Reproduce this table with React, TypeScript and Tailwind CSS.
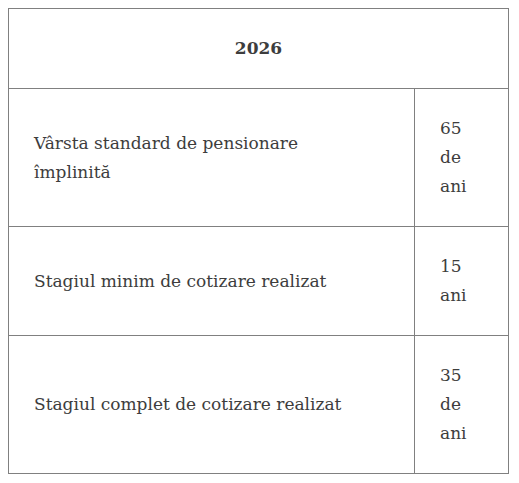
export default function App() {
  const cell = "border border-[#808080] px-[25px] py-[25px] align-middle";
  return (
    <div className="p-2 bg-white min-h-screen">
      <table
        className="border-collapse w-[500px] table-fixed text-[#3d3d3d] text-[17px] leading-[29px]"
        style={{ fontFamily: '"DejaVu Serif", Georgia, serif' }}
      >
        <colgroup>
          <col className="w-[406px]" />
          <col className="w-[94px]" />
        </colgroup>
        <tbody>
          <tr>
            <td colSpan={2} className={`${cell} text-center font-bold`}>
              2026
            </td>
          </tr>
          <tr>
            <td className={cell}>
              Vârsta standard de pensionare
              <br />
              împlinită
            </td>
            <td className={cell}>65 de ani</td>
          </tr>
          <tr>
            <td className={cell}>Stagiul minim de cotizare realizat</td>
            <td className={cell}>15 ani</td>
          </tr>
          <tr>
            <td className={cell}>Stagiul complet de cotizare realizat</td>
            <td className={cell}>35 de ani</td>
          </tr>
        </tbody>
      </table>
    </div>
  );
}
